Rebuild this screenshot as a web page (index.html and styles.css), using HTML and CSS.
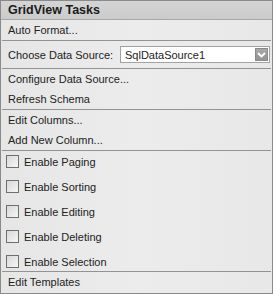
FILE: index.html
```html
<!DOCTYPE html>
<html lang="en">
<head>
  <meta charset="UTF-8" />
  <title>GridView Tasks</title>
  <link rel="stylesheet" href="styles.css">
</head>
<body>
  <div class="panel">
    <div class="panel-header">GridView Tasks</div>
    <div class="item">Auto Format...</div>
    <div class="sep"></div>
    <div class="source-row">
      <span class="source-label">Choose Data Source:</span>
      <div class="select">
        <span class="select-value">SqlDataSource1</span>
        <span class="select-btn">
          <svg width="9" height="6" viewBox="0 0 9 6"><path d="M1 1L4.5 4.5L8 1" fill="none" stroke="#fff" stroke-width="1.8"/></svg>
        </span>
      </div>
    </div>
    <div class="sep"></div>
    <div class="item">Configure Data Source...</div>
    <div class="item">Refresh Schema</div>
    <div class="sep"></div>
    <div class="item">Edit Columns...</div>
    <div class="item">Add New Column...</div>
    <div class="sep"></div>
    <div class="checks">
      <label class="check"><span class="box"></span>Enable Paging</label>
      <label class="check"><span class="box"></span>Enable Sorting</label>
      <label class="check"><span class="box"></span>Enable Editing</label>
      <label class="check"><span class="box"></span>Enable Deleting</label>
      <label class="check"><span class="box"></span>Enable Selection</label>
    </div>
    <div class="sep"></div>
    <div class="item last">Edit Templates</div>
  </div>
</body>
</html>
```

FILE: styles.css
```css
body {
  margin: 0;
  padding: 0;
  background: #fff;
  font-family: 'Liberation Sans', Arial, sans-serif;
  font-size: 11px;
  color: #222;
}
.panel {
  width: 271px;
  height: 292px;
  border: 1px solid #8a8a8a;
  background: linear-gradient(90deg, #e6e6e6, #ececec 50%, #e8e8e8);
  display: flex;
  flex-direction: column;
}
.panel-header {
  height: 18px;
  line-height: 19px;
  border-bottom: 1px solid #a8a8a8;
  background: linear-gradient(#d4d4d4, #cbcbcb);
  padding-left: 7px;
  font-weight: bold;
  font-size: 12.5px;
  color: #1a1a1a;
}
.item {
  height: 20px;
  line-height: 21px;
  padding-left: 7px;
}
.item.last {
  height: 21px;
  line-height: 21px;
}
.sep {
  height: 1px;
  margin: 0 1px;
  background: #939393;
}
.source-row {
  height: 27px;
  display: flex;
  align-items: center;
  padding-left: 7px;
}
.source-label {
  white-space: nowrap;
}
.select {
  flex-shrink: 0;
  margin-left: auto;
  margin-right: 2px;
  width: 148px;
  height: 15px;
  border: 1px solid #a2a2a2;
  background: #fff;
  display: flex;
  align-items: center;
}
.select-value {
  padding-left: 4px;
  flex: 1;
}
.select-btn {
  width: 13px;
  height: 13px;
  margin-right: 1px;
  background: linear-gradient(#a8a8a8, #939393);
  border: 1px solid #8a8a8a;
  box-sizing: border-box;
  display: flex;
  align-items: center;
  justify-content: center;
}
.checks {
  height: 120px;
  box-sizing: border-box;
  padding: 4px 0 3px 5px;
  display: flex;
  flex-direction: column;
  gap: 12px;
}
.check {
  height: 13px;
  display: flex;
  align-items: center;
  gap: 5px;
}
.box {
  width: 13px;
  height: 13px;
  box-sizing: border-box;
  border: 1px solid #6e6e6e;
  background: linear-gradient(135deg, #d8d8d8, #f6f6f6);
}
```
